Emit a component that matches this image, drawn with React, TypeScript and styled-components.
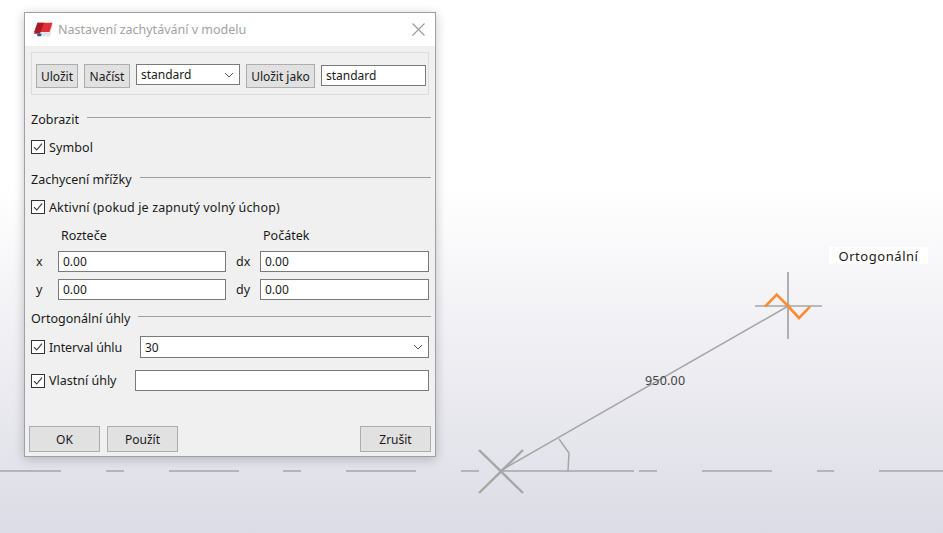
import styled, { createGlobalStyle } from "styled-components";

const GlobalStyle = createGlobalStyle`
    html, body {
        margin: 0;
        padding: 0;
    }
    body {
        font-family: "Noto Sans", "Open Sans", sans-serif;
        font-size: 12.5px;
        color: #1a1a1a;
    }
`;

const Canvas = styled.div`
    position: relative;
    width: 943px;
    height: 533px;
    overflow: hidden;
    background: linear-gradient(180deg, #ffffff 0%, #ffffff 35%, #dcdce6 100%);
`;

const Drawing = styled.svg`
    position: absolute;
    inset: 0;
`;

const DimensionLabel = styled.span`
    position: absolute;
    left: 645px;
    top: 373px;
    color: #444;
    font-size: 12.5px;
    letter-spacing: 0.2px;
    line-height: 16px;
`;

const HintLabel = styled.span`
    position: absolute;
    left: 829px;
    top: 247px;
    width: 99px;
    height: 17px;
    background: #fff;
    text-align: center;
    line-height: 18px;
    font-size: 13px;
    letter-spacing: 0.55px;
`;

const Dialog = styled.div`
    position: absolute;
    left: 24px;
    top: 12px;
    width: 412px;
    height: 445px;
    box-sizing: border-box;
    border: 1px solid #a0a0a0;
    background: #f0f0f0;
    box-shadow: 0 2px 10px rgba(0, 0, 0, 0.22);
    display: flex;
    flex-direction: column;
`;

const TitleBar = styled.div`
    height: 33px;
    flex: none;
    background: #fff;
    display: flex;
    align-items: center;
    padding: 0 10px 0 9px;
    gap: 4px;
`;

const Title = styled.span`
    flex: 1;
    color: #a2a2a2;
    font-size: 12.5px;
`;

const Body = styled.div`
    flex: 1;
    padding: 6px 5px 4px 6px;
    display: flex;
    flex-direction: column;
`;

const Toolbar = styled.div`
    width: 398px;
    height: 43px;
    box-sizing: border-box;
    border: 1px solid #dcdcdc;
    display: flex;
    align-items: flex-start;
    padding: 11px 0 0 4px;
    gap: 6px;
`;

const Button = styled.button<{ $w: number; $h?: number }>`
    width: ${(p) => p.$w}px;
    height: ${(p) => p.$h ?? 24}px;
    flex: none;
    padding: 0;
    box-sizing: border-box;
    border: 1px solid #adadad;
    background: #e1e1e1;
    font: inherit;
    font-size: 12px;
    color: #1a1a1a;
`;

const Field = styled.div<{ $w: number; $h?: number; $nudge?: number }>`
    width: ${(p) => p.$w}px;
    height: ${(p) => p.$h ?? 21}px;
    flex: none;
    margin-top: ${(p) => p.$nudge ?? 0}px;
    box-sizing: border-box;
    border: 1px solid #7a7a7a;
    background: #fff;
    display: flex;
    align-items: center;
    justify-content: space-between;
    padding: 0 5px 0 4px;
    font-size: 12px;
    line-height: 17px;
`;

const Section = styled.div<{ $top: number }>`
    display: flex;
    align-items: center;
    gap: 8px;
    margin-top: ${(p) => p.$top}px;
    height: 18px;
    width: 400px;
`;

const Rule = styled.div`
    flex: 1;
    height: 1px;
    margin-top: -3px;
    background: #a0a0a0;
`;

const CheckRow = styled.label<{ $top: number; $track?: number }>`
    display: flex;
    align-items: center;
    gap: 4px;
    height: 18px;
    margin-top: ${(p) => p.$top}px;
    letter-spacing: ${(p) => p.$track ?? 0}px;
`;

const Box = styled.span`
    width: 14px;
    height: 14px;
    flex: none;
    box-sizing: border-box;
    border: 1px solid #333;
    background: #fff;
    display: flex;
`;

const SpacingHead = styled.div`
    display: grid;
    grid-template-columns: 202px 1fr;
    padding-left: 30px;
    margin-top: 10px;
    height: 18px;
    align-items: center;
`;

const GridRow = styled.div<{ $top: number }>`
    display: grid;
    grid-template-columns: 27px 168px 34px 169px;
    align-items: center;
    margin-top: ${(p) => p.$top}px;
`;

const AxisLabel = styled.span<{ $pad: number }>`
    padding-left: ${(p) => p.$pad}px;
`;

const FieldRow = styled.div<{ $top: number; $labelWidth: number }>`
    display: grid;
    grid-template-columns: ${(p) => p.$labelWidth}px 1fr;
    align-items: center;
    width: 398px;
    margin-top: ${(p) => p.$top}px;
`;

const Footer = styled.div`
    margin: auto -1px 0 -2px;
    display: flex;
    gap: 7px;
`;

const Spacer = styled.div`
    flex: 1;
`;

function Check() {
    return (
        <Box>
            <svg width="12" height="12" viewBox="0 0 12 12">
                <path d="M2 6.2 L4.7 9 L10 2.6" fill="none" stroke="#333" strokeWidth="1.1" />
            </svg>
        </Box>
    );
}

function Chevron() {
    return (
        <svg width="10" height="6" viewBox="0 0 10 6">
            <path d="M1 1 L5 5 L9 1" fill="none" stroke="#555" strokeWidth="1" />
        </svg>
    );
}

function AppIcon() {
    return (
        <svg width="20" height="16" viewBox="0 0 20 16">
            <path d="M6 3 H19 L16 14.5 H4 Z" fill="#e4e4ea" />
            <path d="M3.5 0.8 H18.5 L15.5 10 H0 Z" fill="#e0303a" />
            <path d="M3.5 0.8 H10 L6 11.8 H0 Z" fill="#a81a24" />
            <path d="M2.8 11.8 H7.8 L6.8 14.3 H3.6 Z" fill="#2a55a8" />
        </svg>
    );
}

function CloseIcon() {
    return (
        <svg width="13" height="13" viewBox="0 0 13 13">
            <path d="M0.5 0.5 L12.5 12.5 M12.5 0.5 L0.5 12.5" stroke="#9a9a9a" strokeWidth="1.1" />
        </svg>
    );
}

function Scene() {
    return (
        <Drawing width="943" height="533" viewBox="0 0 943 533">
            <g stroke="#a6a6a6" strokeWidth="1.7" fill="none">
                <path d="M0 471 H61 M106 471 H124 M169 471 H239 M283 471 H301 M346 471 H416 M461 471 H479" />
                <path d="M639 471 H657 M702 471 H772 M817 471 H834 M879 471 H943" />
                <path d="M500 471 H634" />
                <path d="M500 471 L790 305" strokeWidth="1.5" />
                <path d="M479 450 L523 493 M523 450 L479 493" strokeWidth="2.4" />
                <path d="M559 439 L569 453 L568 471" strokeWidth="1.5" />
                <path d="M788 272 V339" strokeWidth="2" stroke="#b0b0b0" />
                <path d="M755 306 H822" strokeWidth="1.4" />
            </g>
            <path d="M765 306.7 L776.7 294.5 L788 306 L799 318 L810 306.7" fill="none" stroke="#fb8c32" strokeWidth="2.6" />
        </Drawing>
    );
}

export default function App() {
    return (
        <>
            <GlobalStyle />
            <Canvas>
                <Scene />
                <DimensionLabel>950.00</DimensionLabel>
                <HintLabel>Ortogonální</HintLabel>
                <Dialog>
                    <TitleBar>
                        <AppIcon />
                        <Title>Nastavení zachytávání v modelu</Title>
                        <CloseIcon />
                    </TitleBar>
                    <Body>
                        <Toolbar>
                            <Button $w={42}>Uložit</Button>
                            <Button $w={46}>Načíst</Button>
                            <Field $w={104}>
                                standard
                                <Chevron />
                            </Field>
                            <Button $w={69}>Uložit jako</Button>
                            <Field $w={105} $nudge={1}>standard</Field>
                        </Toolbar>
                        <Section $top={15}>
                            Zobrazit
                            <Rule />
                        </Section>
                        <CheckRow $top={10} $track={0.1}>
                            <Check />
                            Symbol
                        </CheckRow>
                        <Section $top={14}>
                            Zachycení mřížky
                            <Rule />
                        </Section>
                        <CheckRow $top={10} $track={0.13}>
                            <Check />
                            Aktivní (pokud je zapnutý volný úchop)
                        </CheckRow>
                        <SpacingHead>
                            <span>Rozteče</span>
                            <span>Počátek</span>
                        </SpacingHead>
                        <GridRow $top={7}>
                            <AxisLabel $pad={5}>x</AxisLabel>
                            <Field $w={168}>0.00</Field>
                            <AxisLabel $pad={10}>dx</AxisLabel>
                            <Field $w={169}>0.00</Field>
                        </GridRow>
                        <GridRow $top={7}>
                            <AxisLabel $pad={5}>y</AxisLabel>
                            <Field $w={168}>0.00</Field>
                            <AxisLabel $pad={10}>dy</AxisLabel>
                            <Field $w={169}>0.00</Field>
                        </GridRow>
                        <Section $top={9}>
                            Ortogonální úhly
                            <Rule />
                        </Section>
                        <FieldRow $top={9} $labelWidth={109}>
                            <CheckRow $top={0} $track={-0.15}>
                                <Check />
                                Interval úhlu
                            </CheckRow>
                            <Field $w={289} $h={22}>
                                30
                                <Chevron />
                            </Field>
                        </FieldRow>
                        <FieldRow $top={12} $labelWidth={104}>
                            <CheckRow $top={0}>
                                <Check />
                                Vlastní úhly
                            </CheckRow>
                            <Field $w={294} />
                        </FieldRow>
                        <Footer>
                            <Button $w={71} $h={26}>OK</Button>
                            <Button $w={71} $h={26}>Použít</Button>
                            <Spacer />
                            <Button $w={71} $h={26}>Zrušit</Button>
                        </Footer>
                    </Body>
                </Dialog>
            </Canvas>
        </>
    );
}
